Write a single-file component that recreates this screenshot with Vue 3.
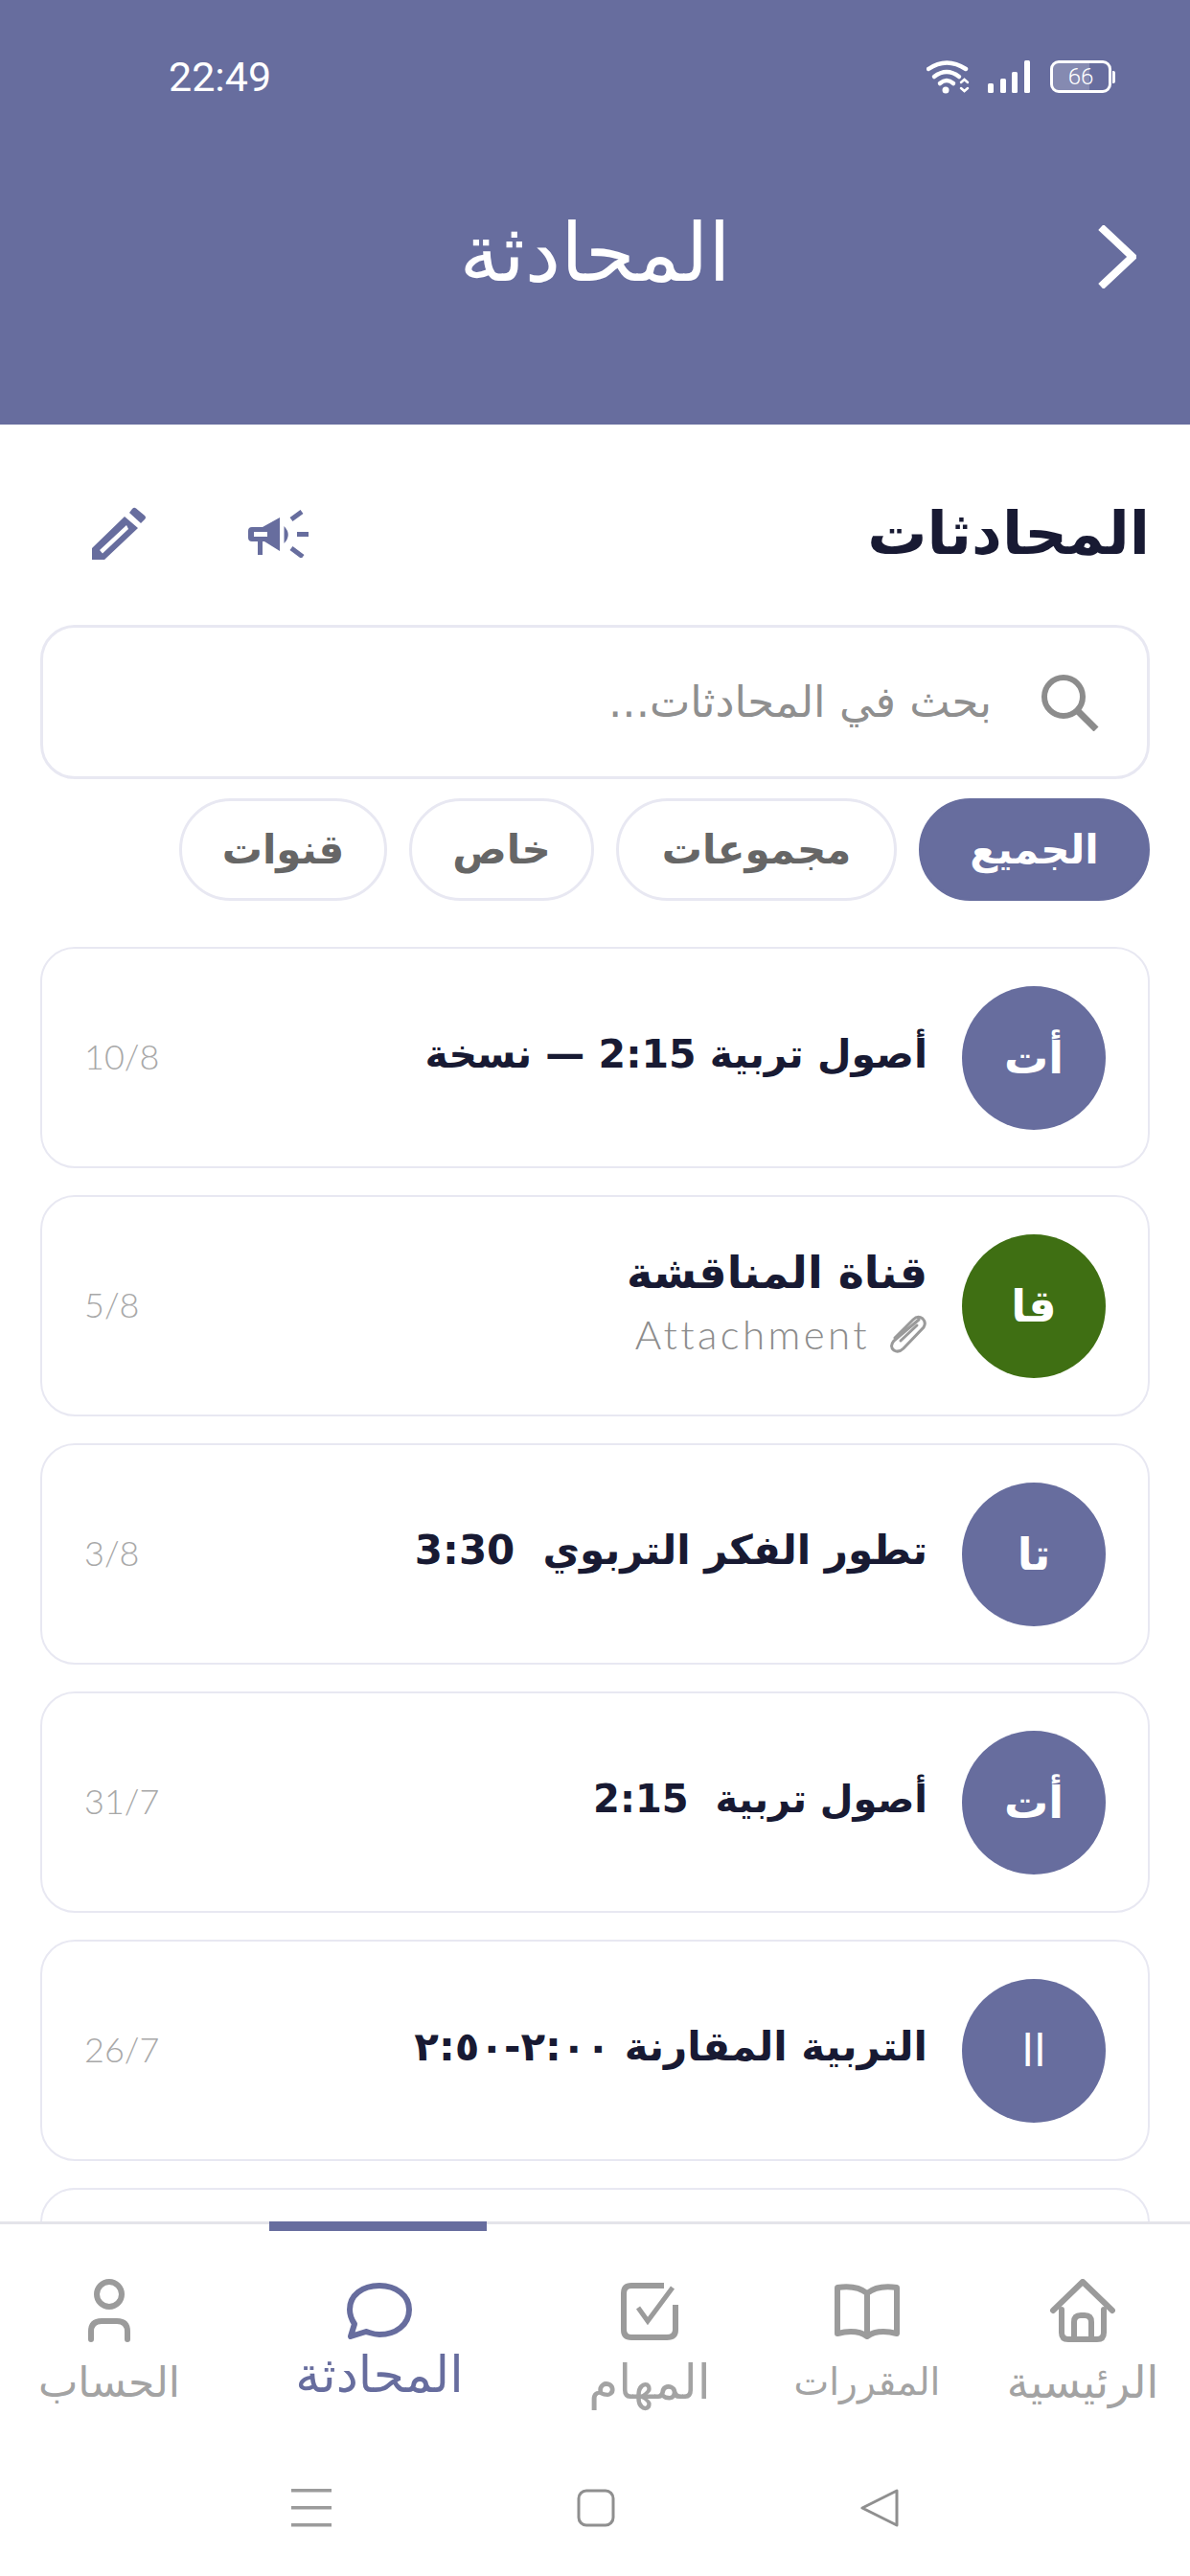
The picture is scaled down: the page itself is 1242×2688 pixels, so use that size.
<script setup>
const chips = [
  { label: 'الجميع', active: true, width: 241 },
  { label: 'مجموعات', width: 293 },
  { label: 'خاص', width: 193 },
  { label: 'قنوات', width: 217 },
]
const chats = [
  { initials: 'أت', title: 'أصول تربية 2:15 — نسخة', date: '10/8', color: '#676d9e', size: 41 },
  { initials: 'قا', title: 'قناة المناقشة', date: '5/8', color: '#3f6f13', attachment: true, size: 46 },
  { initials: 'تا', title: 'تطور الفكر التربوي  3:30', date: '3/8', color: '#676d9e', size: 42 },
  { initials: 'أت', title: 'أصول تربية  2:15', date: '31/7', color: '#676d9e', size: 40 },
  { initials: 'اا', title: 'التربية المقارنة ٢:٠٠-٢:٥٠', date: '26/7', color: '#676d9e', size: 42, thin: true },
  { initials: '', title: '', date: '', color: '#676d9e', size: 42 },
]
const tabs = [
  { key: 'home', label: 'الرئيسية', size: 46 },
  { key: 'book', label: 'المقررات', size: 39 },
  { key: 'tasks', label: 'المهام', size: 50 },
  { key: 'chat', label: 'المحادثة', active: true, size: 52 },
  { key: 'user', label: 'الحساب', size: 44 },
]
</script>

<template>
  <div class="app" dir="rtl">
    <header class="header">
      <div class="status" dir="ltr">
        <span class="time">22:49</span>
        <div class="status-icons">
          <svg class="wifi" width="46" height="36" viewBox="0 0 46 36" fill="none" stroke="#fff" stroke-width="4.500" stroke-linecap="round">
            <path d="M2 10Q21 -3 41 10" />
            <path d="M8 18Q21 8 34 18" />
            <path d="M14 25Q21 19 28 25" />
            <circle cx="20" cy="32" r="3.500" fill="#fff" stroke="none" />
            <path d="M36 24l3.500-3 3.500 3M36 30l3.500 3 3.500-3" stroke-width="2.500" />
          </svg>
          <svg class="bars" width="44" height="34" viewBox="0 0 44 34" fill="#fff">
            <rect x="0" y="24" width="6" height="10" rx="1.500" />
            <rect x="13" y="19" width="6" height="15" rx="1.500" />
            <rect x="25" y="12" width="6" height="22" rx="1.500" />
            <rect x="38" y="0" width="6" height="34" rx="1.500" />
          </svg>
          <div class="battery">
            <div class="battery-fill"></div>
            <span class="battery-text">66</span>
          </div>
          <div class="nub"></div>
        </div>
      </div>
      <div class="titlebar">
        <h1 class="page-title">المحادثة</h1>
        <svg class="chevron" width="40" height="66" viewBox="0 0 40 66" fill="none" stroke="#fff" stroke-width="8">
          <path d="M3 2L36 33L3 64" />
        </svg>
      </div>
    </header>

    <main class="main">
      <div class="heading-row">
        <h2 class="heading">المحادثات</h2>
        <div class="tools">
          <svg class="tool" width="64" height="50" viewBox="0 0 64 50" fill="#676d9e">
            <path fill-rule="evenodd" d="M4 18H15L33 8V43L17 33H15V47H10V33H4Q0 33 0 29V22Q0 18 4 18ZM6 23V28H20V23Z" />
            <path d="M37.500 17Q46 26 37.500 35Z" />
            <path d="M45 10L56 2M51 25.500H63M45 40L57 49" fill="none" stroke="#676d9e" stroke-width="5" />
          </svg>
          <svg class="tool" width="58" height="56" viewBox="0 0 58 56" fill="#676d9e">
            <path fill-rule="evenodd" d="M0 43L34 10L48 22L13 55H0ZM8 45L11 48.500L38 23L36 19Z" />
            <path d="M39 6L42 2Q44 0 46 1.500L55 9Q57 11 55 13L51 17Z" />
          </svg>
        </div>
      </div>

      <div class="search">
        <svg class="search-icon" width="62" height="60" viewBox="0 0 62 60" fill="none" stroke="#8c8c8c" stroke-width="6">
          <circle cx="25" cy="24" r="20" />
          <path d="M39 38L59 58" stroke-width="7" />
        </svg>
        <span class="placeholder">بحث في المحادثات...</span>
      </div>

      <div class="chips">
        <div
          v-for="chip in chips"
          :key="chip.label"
          class="chip"
          :class="{ 'chip-active': chip.active }"
          :style="{ width: chip.width + 'px' }"
        >{{ chip.label }}</div>
      </div>

      <div class="list">
        <article v-for="(chat, i) in chats" :key="i" class="card">
          <div class="avatar" :class="{ 'avatar-thin': chat.thin }" :style="{ background: chat.color }" v-if="chat.title">{{ chat.initials }}</div>
          <div class="card-body" v-if="chat.title">
            <div class="card-title" :style="{ fontSize: chat.size + 'px' }">{{ chat.title }}</div>
            <div class="card-sub" v-if="chat.attachment">
              <svg width="42" height="42" viewBox="0 0 42 42" fill="none" stroke="#9a9a9a" stroke-width="3" stroke-linecap="round">
                <path d="M33 6L7 28Q2 34 7 38Q12 41 17 36L38 14Q41 9 37 5Q32 1 27 6L8 25" />
                <path d="M14 28L31 12" />
              </svg>
              <span class="sub-text" dir="ltr">Attachment</span>
            </div>
          </div>
          <div class="card-date" v-if="chat.title">{{ chat.date }}</div>
        </article>
      </div>
    </main>

    <footer class="footer">
      <nav class="tabs">
        <div v-for="tab in tabs" :key="tab.key" class="tab" :class="{ 'tab-active': tab.active }">
          <span v-if="tab.active" class="indicator"></span>
          <svg v-if="tab.key === 'home'" width="68" height="68" viewBox="0 0 68 68" fill="none" stroke="#9b9b9b" stroke-width="6" stroke-linecap="round" stroke-linejoin="round">
            <path d="M3 33L34 3L65 33" />
            <path d="M12 32V56Q12 63 19 63H49Q56 63 56 56V32" />
            <path d="M25 63V45Q25 38 32 38H36Q43 38 43 45V63" />
          </svg>
          <svg v-else-if="tab.key === 'book'" width="70" height="58" viewBox="0 0 70 58" fill="none" stroke="#9b9b9b" stroke-width="6" stroke-linejoin="round">
            <path d="M35 10Q24 1 4 4V52Q24 47 35 55Q46 47 66 52V4Q46 1 35 10Z" />
            <path d="M35 10V55" />
          </svg>
          <svg v-else-if="tab.key === 'tasks'" width="62" height="62" viewBox="0 0 62 62" fill="none" stroke="#9b9b9b" stroke-width="6">
            <path d="M46 4H12Q4 4 4 12V50Q4 58 12 58H49Q58 58 58 50V24" />
            <path d="M19 27L29 41L55 6" stroke-width="5" />
          </svg>
          <svg v-else-if="tab.key === 'chat'" width="70" height="62" viewBox="0 0 70 62" fill="none" stroke="#676d9e" stroke-width="6" stroke-linejoin="round">
            <path d="M5 57L9 44C5 38 4 34 4 29C4 14 17 4 35 4C52 4 66 14 66 29C66 45 52 55 35 55C29 55 25 53 21 52Z" />
          </svg>
          <svg v-else width="48" height="68" viewBox="0 0 48 68" fill="none" stroke="#9b9b9b" stroke-width="6" stroke-linecap="round">
            <circle cx="24" cy="16" r="13" />
            <path d="M5 63V55Q5 44 16 44H32Q43 44 43 55V63" />
          </svg>
          <span class="tab-label" :style="{ fontSize: tab.size + 'px' }">{{ tab.label }}</span>
        </div>
      </nav>
      <div class="sysnav" dir="ltr">
        <svg width="42" height="40" viewBox="0 0 42 40" fill="#9b9b9b">
          <rect x="0" y="0" width="42" height="3.500" />
          <rect x="0" y="18" width="42" height="3.500" />
          <rect x="0" y="36" width="42" height="3.500" />
        </svg>
        <svg width="40" height="40" viewBox="0 0 40 40" fill="none" stroke="#8f8f8f" stroke-width="3">
          <rect x="2" y="2" width="36" height="36" rx="8" />
        </svg>
        <svg width="40" height="40" viewBox="0 0 40 40" fill="none" stroke="#8f8f8f" stroke-width="3" stroke-linejoin="round">
          <path d="M2 20L38 2V38Z" />
        </svg>
      </div>
    </footer>
  </div>
</template>

<style>
html, body { margin: 0; background: #fff; }
</style>

<style scoped>
.app {
  width: 1242px;
  height: 2688px;
  display: flex;
  flex-direction: column;
  overflow: hidden;
  background: #fff;
  font-family: "DejaVu Sans", sans-serif;
}
.header {
  height: 443px;
  flex: none;
  background: #676d9e;
  color: #fff;
  display: flex;
  flex-direction: column;
}
.status {
  height: 64px;
  margin-top: 48px;
  padding: 0 78px 0 176px;
  display: flex;
  align-items: center;
  justify-content: space-between;
}
.time {
  font: 400 43px Roboto, sans-serif;
}
.status-icons {
  display: flex;
  align-items: center;
}
.bars { margin-left: 18px; }
.battery {
  margin-left: 21px;
  width: 64px;
  height: 34px;
  box-sizing: border-box;
  border: 3px solid #fff;
  border-radius: 9px;
  position: relative;
  display: flex;
  align-items: center;
  justify-content: center;
  overflow: hidden;
}
.battery-fill {
  position: absolute;
  left: 0;
  top: 0;
  bottom: 0;
  width: 66%;
  background: rgba(255, 255, 255, .2);
}
.battery-text {
  position: relative;
  font: 300 24px Roboto, sans-serif;
  color: #fff;
}
.nub {
  width: 3px;
  height: 13px;
  margin-left: 1px;
  background: #fff;
  border-radius: 0 2px 2px 0;
}
.titlebar {
  position: relative;
  height: 100px;
  margin-top: 102px;
  display: flex;
  justify-content: center;
  align-items: center;
}
.page-title {
  margin: 0;
  font-size: 84px;
  font-weight: 400;
  line-height: 100px;
}
.chevron {
  position: absolute;
  left: 1146px;
  top: 21px;
}
.main {
  flex: 1;
  min-height: 0;
  overflow: hidden;
  padding: 0 42px;
}
.heading-row {
  height: 209px;
  box-sizing: border-box;
  padding-top: 18px;
  display: flex;
  align-items: center;
  justify-content: space-between;
}
.heading {
  margin: 0;
  font-size: 62px;
  font-weight: 700;
  color: #181a33;
}
.tools {
  display: flex;
  align-items: center;
  gap: 105px;
  padding-left: 54px;
}
.search {
  height: 161px;
  box-sizing: border-box;
  border: 3px solid #e8e8f2;
  border-radius: 36px;
  display: flex;
  align-items: center;
  padding: 0 50px;
  gap: 50px;
}
.placeholder {
  font-size: 45px;
  color: #8f8f8f;
}
.chips {
  display: flex;
  gap: 23px;
  margin-top: 20px;
}
.chip {
  height: 107px;
  box-sizing: border-box;
  border: 3px solid #e8e8f2;
  border-radius: 54px;
  display: flex;
  align-items: center;
  justify-content: center;
  font-size: 42px;
  font-weight: 700;
  color: #666;
}
.chip-active {
  background: #676d9e;
  border-color: #676d9e;
  color: #fff;
}
.list {
  margin-top: 48px;
  display: flex;
  flex-direction: column;
  gap: 28px;
}
.card {
  height: 231px;
  flex: none;
  box-sizing: border-box;
  border: 2px solid #e8e8f2;
  border-radius: 36px;
  display: flex;
  align-items: center;
  padding: 0 44px;
}
.avatar {
  width: 150px;
  height: 150px;
  flex: none;
  border-radius: 50%;
  color: #fff;
  font-size: 46px;
  font-weight: 700;
  display: flex;
  align-items: center;
  justify-content: center;
}
.avatar-thin {
  font-weight: 400;
}
.card-body {
  flex: 1;
  min-width: 0;
  margin-right: 36px;
  padding-bottom: 8px;
  display: flex;
  flex-direction: column;
  gap: 12px;
}
.card-title {
  font-weight: 700;
  color: #181a33;
  white-space: pre;
  line-height: 54px;
}
.card-sub {
  display: flex;
  align-items: center;
  gap: 18px;
}
.sub-text {
  font: 300 42px Lato, sans-serif;
  letter-spacing: 3.400px;
  color: #8c8c8c;
}
.card-date {
  font: 300 36px Lato, sans-serif;
  color: #a8a8a8;
  padding-bottom: 4px;
}
.footer {
  height: 370px;
  flex: none;
  border-top: 3px solid #e4e4ea;
  box-sizing: border-box;
  background: #fff;
  display: flex;
  flex-direction: column;
}
.tabs {
  display: grid;
  grid-template-columns: 224px 226px 228px 336px 228px;
}
.tab {
  position: relative;
  display: flex;
  flex-direction: column;
  align-items: center;
  padding-top: 57px;
  height: 270px;
  box-sizing: border-box;
}
.tab svg {
  height: 68px;
}
.tab-label {
  margin-top: 14px;
  line-height: 52px;
  color: #a3a3a3;
}
.indicator {
  position: absolute;
  top: -3px;
  left: 53px;
  width: 227px;
  height: 10px;
  background: #676d9e;
}
.tab-active .tab-label {
  color: #676d9e;
  margin-top: 6px;
}
.sysnav {
  display: flex;
  padding: 6px 0 0 304px;
  gap: 256px;
}
</style>
